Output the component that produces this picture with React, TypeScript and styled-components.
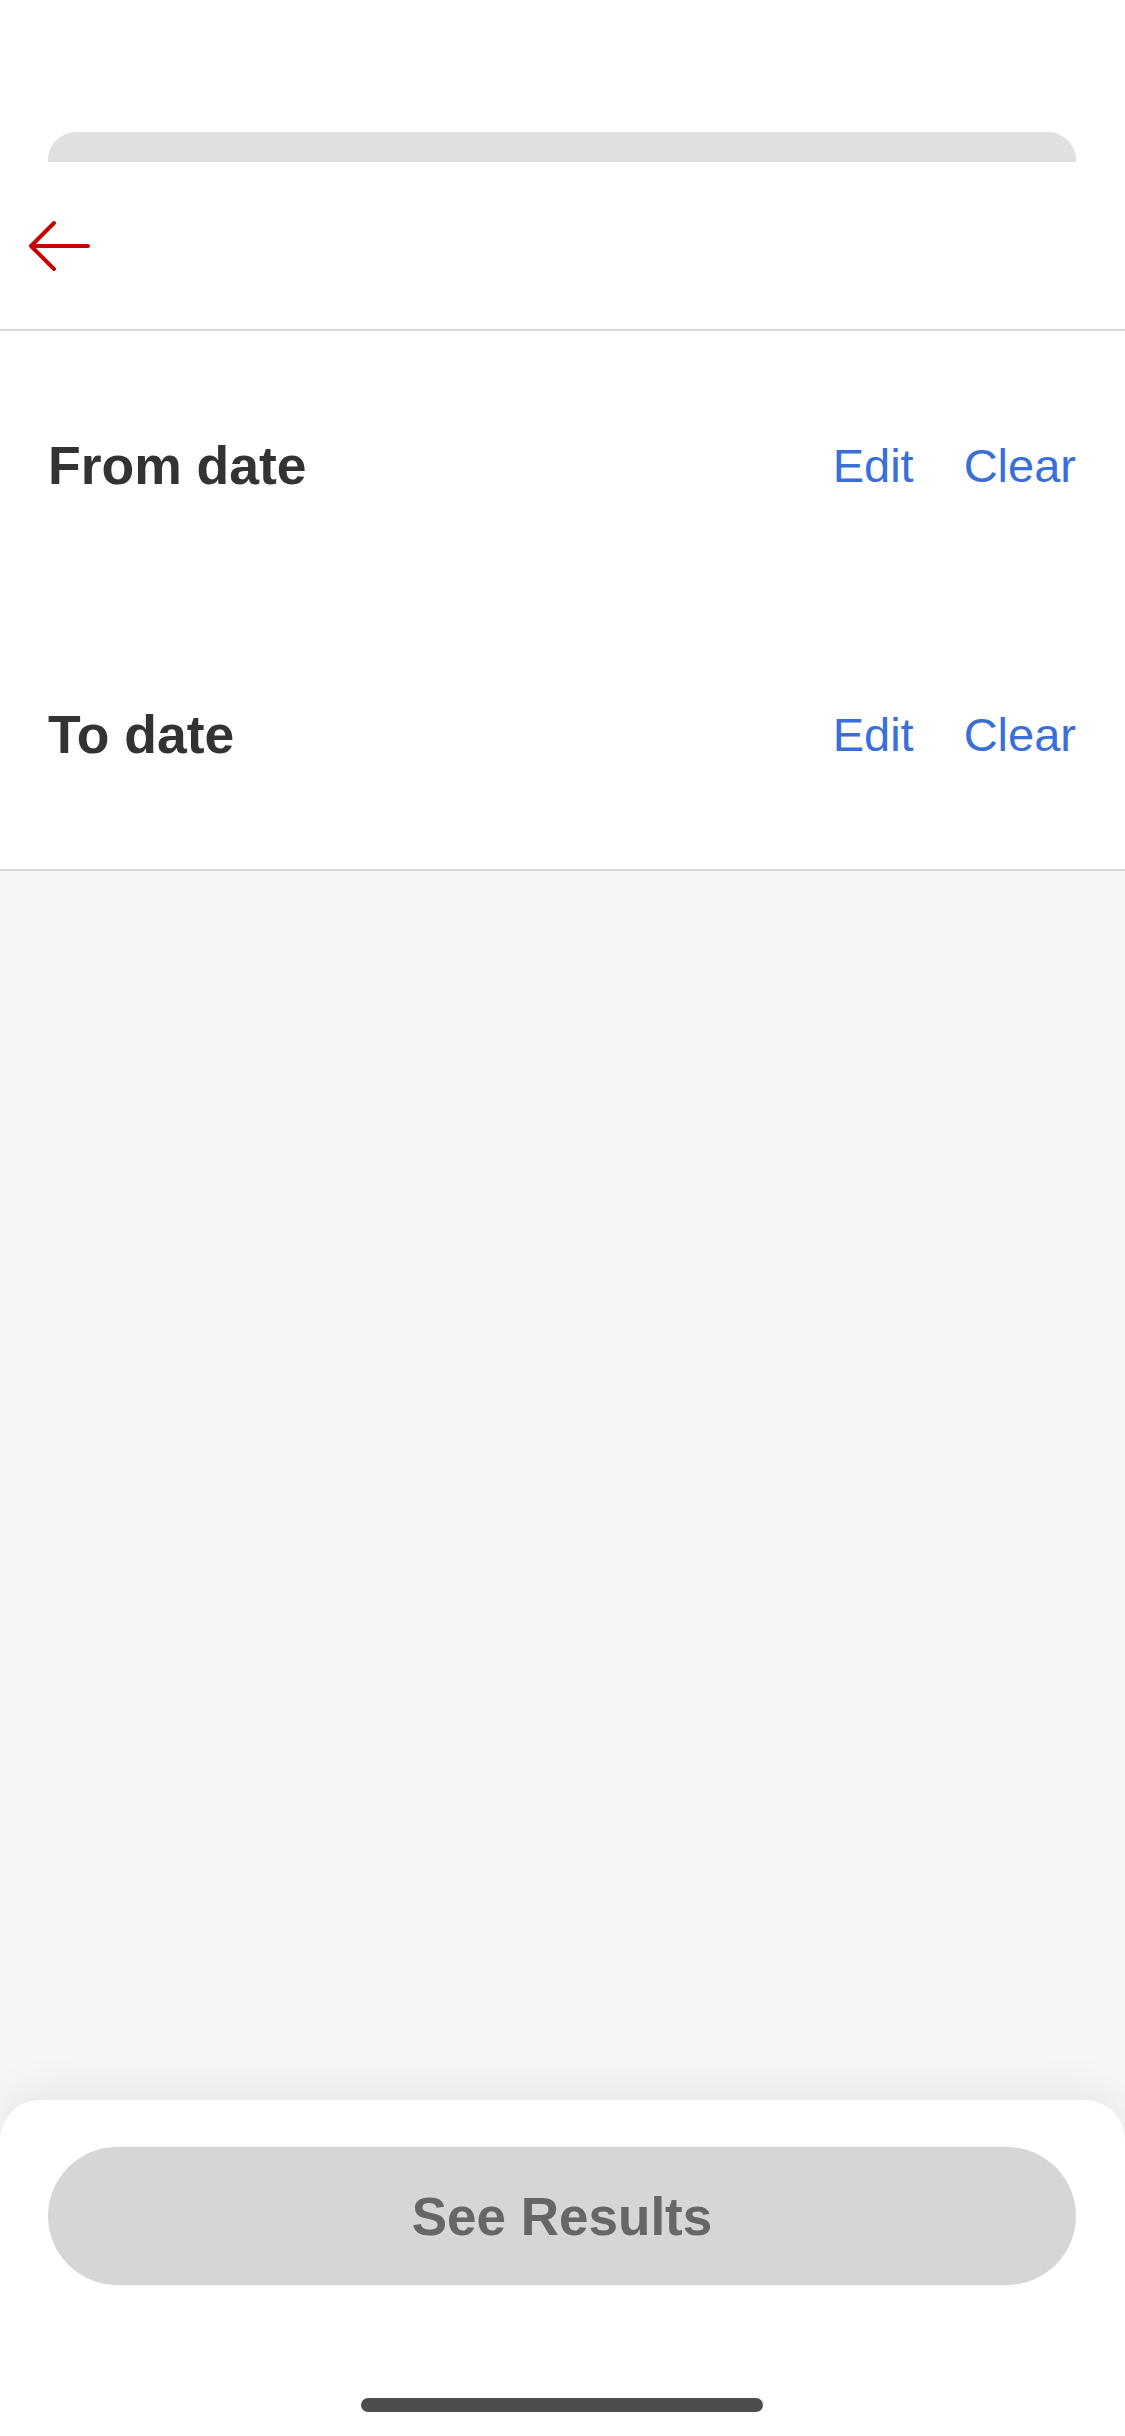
import React from "react";
import styled, { createGlobalStyle } from "styled-components";

const GlobalStyle = createGlobalStyle`
  html, body {
    margin: 0;
    padding: 0;
    background: #f6f6f6;
  }
  body {
    font-family: "Liberation Sans", Arial, Helvetica, sans-serif;
  }
  * { box-sizing: border-box; }
`;

const Page = styled.div`
  min-height: 100vh;
  display: flex;
  flex-direction: column;
  background: #f6f6f6;
`;

const TopArea = styled.div`
  background: #ffffff;
  padding: 132px 49px 0 48px;
`;

const GrabBar = styled.div`
  height: 30px;
  background: #e0e0e0;
  border-radius: 28px 28px 0 0;
`;

const Header = styled.header`
  background: #ffffff;
  height: 169px;
  display: flex;
  align-items: center;
  padding-left: 26px;
  border-bottom: 2px solid #d8d8d8;
`;

const BackButton = styled.button`
  border: none;
  background: transparent;
  padding: 0;
  margin: 0;
  display: flex;
  cursor: pointer;
`;

const Section = styled.section`
  background: #ffffff;
  border-bottom: 2px solid #d8d8d8;
`;

const Row = styled.div`
  height: 269px;
  display: flex;
  align-items: center;
  justify-content: space-between;
  padding: 0 49px 0 48px;
`;

const Label = styled.h2`
  margin: 0;
  font-size: 53.5px;
  font-weight: 700;
  color: #333333;
`;

const Actions = styled.div`
  display: flex;
  align-items: center;
  gap: 50px;
`;

const LinkButton = styled.button`
  border: none;
  background: transparent;
  padding: 0;
  font-family: "Liberation Sans", Arial, Helvetica, sans-serif;
  font-size: 47px;
  font-weight: 400;
  color: #3a6fd8;
  cursor: pointer;
`;

const Spacer = styled.div`
  flex: 1;
  background: #f6f6f6;
`;

const BottomSheet = styled.footer`
  height: 336px;
  background: #ffffff;
  border-radius: 40px 40px 0 0;
  box-shadow: 0 -12px 40px rgba(0, 0, 0, 0.06);
  padding: 47px 49px 0 48px;
  display: flex;
  flex-direction: column;
  align-items: center;
`;

const ResultsButton = styled.button`
  width: 100%;
  height: 138px;
  border: none;
  border-radius: 69px;
  background: #d6d6d6;
  color: #666666;
  font-family: "Liberation Sans", Arial, Helvetica, sans-serif;
  font-size: 53px;
  font-weight: 700;
`;

const HomeIndicator = styled.div`
  margin-top: 113px;
  width: 402px;
  height: 14px;
  border-radius: 7px;
  background: #4d4d4d;
`;

const BackArrow = () => (
  <svg width="66" height="52" viewBox="0 0 66 52" fill="none">
    <path
      d="M62 26H5M28 3L5 26L28 49"
      stroke="#cc0000"
      strokeWidth="4"
      strokeLinecap="round"
      strokeLinejoin="round"
    />
  </svg>
);

const rows = ["From date", "To date"];

export default function App() {
  return (
    <>
      <GlobalStyle />
      <Page>
        <TopArea>
          <GrabBar />
        </TopArea>
        <Header>
          <BackButton aria-label="Back">
            <BackArrow />
          </BackButton>
        </Header>
        <Section>
          {rows.map((label) => (
            <Row key={label}>
              <Label>{label}</Label>
              <Actions>
                <LinkButton>Edit</LinkButton>
                <LinkButton>Clear</LinkButton>
              </Actions>
            </Row>
          ))}
        </Section>
        <Spacer />
        <BottomSheet>
          <ResultsButton>See Results</ResultsButton>
          <HomeIndicator />
        </BottomSheet>
      </Page>
    </>
  );
}
